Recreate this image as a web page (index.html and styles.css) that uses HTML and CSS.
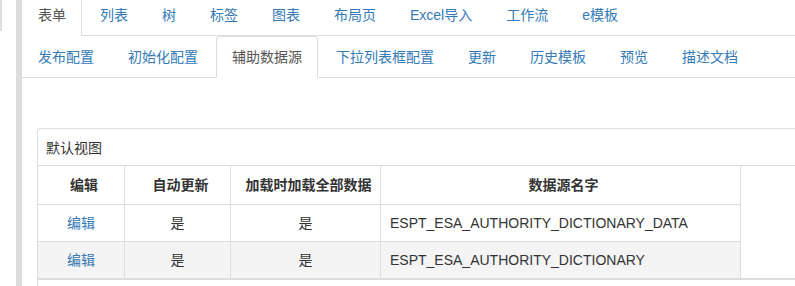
FILE: index.html
```html
<!DOCTYPE html>
<html lang="zh-CN">
<head>
    <meta charset="UTF-8">
    <title>辅助数据源</title>
    <link rel="stylesheet" href="styles.css">
</head>
<body>
    <div class="layout">
        <div class="side">
            <div class="side-mark"></div>
        </div>
        <div class="side-bar"></div>
        <div class="main">
            <ul class="nav-tabs top-tabs">
                <li class="active"><a href="#">表单</a></li>
                <li><a href="#">列表</a></li>
                <li><a href="#">树</a></li>
                <li><a href="#">标签</a></li>
                <li><a href="#">图表</a></li>
                <li><a href="#">布局页</a></li>
                <li><a href="#">Excel导入</a></li>
                <li><a href="#">工作流</a></li>
                <li><a href="#">e模板</a></li>
            </ul>
            <ul class="nav-tabs">
                <li><a href="#">发布配置</a></li>
                <li><a href="#">初始化配置</a></li>
                <li class="active"><a href="#">辅助数据源</a></li>
                <li><a href="#">下拉列表框配置</a></li>
                <li><a href="#">更新</a></li>
                <li><a href="#">历史模板</a></li>
                <li><a href="#">预览</a></li>
                <li><a href="#">描述文档</a></li>
            </ul>
            <div class="tab-content">
                <div class="panel">
                    <div class="panel-heading">默认视图</div>
                    <div class="table-wrap">
                        <table class="grid">
                            <tr>
                                <th class="col-edit">编辑</th>
                                <th class="col-auto">自动更新</th>
                                <th class="col-load">加载时加载全部数据</th>
                                <th class="col-name">数据源名字</th>
                            </tr>
                            <tr>
                                <td><a href="#">编辑</a></td>
                                <td>是</td>
                                <td>是</td>
                                <td class="name">ESPT_ESA_AUTHORITY_DICTIONARY_DATA</td>
                            </tr>
                            <tr class="alt">
                                <td><a href="#">编辑</a></td>
                                <td>是</td>
                                <td>是</td>
                                <td class="name">ESPT_ESA_AUTHORITY_DICTIONARY</td>
                            </tr>
                        </table>
                    </div>
                </div>
            </div>
        </div>
    </div>
</body>
</html>
```

FILE: styles.css
```css
body {
    margin: 0;
    font-family: "Liberation Sans", "Noto Sans CJK SC", sans-serif;
    font-size: 14px;
    line-height: 20px;
    color: #333;
    background: #fff;
    overflow: hidden;
}
a {
    color: #337ab7;
    text-decoration: none;
}
.layout {
    display: flex;
    height: 286px;
    overflow: hidden;
}
.side {
    width: 16px;
    flex: none;
}
.side-mark {
    width: 2px;
    height: 31px;
    background: #dddddd;
}
.side-bar {
    width: 6px;
    flex: none;
    background: #dddddd;
}
.main {
    flex: 1;
    min-width: 0;
    overflow: hidden;
}
.nav-tabs {
    display: flex;
    list-style: none;
    margin: 0;
    padding: 0;
    border-bottom: 1px solid #ddd;
}
.top-tabs {
    margin-top: -6px;
}
.nav-tabs li {
    margin-bottom: -1px;
}
.nav-tabs a {
    display: block;
    padding: 10px 15px;
    margin-right: 2px;
    border: 1px solid transparent;
    border-radius: 4px 4px 0 0;
    white-space: nowrap;
}
.nav-tabs .active a {
    color: #555;
    background: #fff;
    border-color: #ddd;
    border-bottom-color: transparent;
}
.top-tabs .active a {
    border-left-color: transparent;
}
.tab-content {
    padding-top: 50px;
}
.panel {
    margin-left: 15px;
    border-top: 1px solid #ddd;
    border-left: 1px solid #ddd;
    border-radius: 4px 0 0 0;
    height: 157px;
}
.panel-heading {
    padding: 9px 8px 7px;
    border-bottom: 1px solid #ddd;
}
.table-wrap {
    border-bottom: 2px solid #ddd;
}
.grid {
    border-collapse: collapse;
}
.grid th,
.grid td {
    border-right: 1px solid #ddd;
    border-bottom: 1px solid #ddd;
    text-align: center;
    padding: 8px;
}
.grid tr:last-child td {
    border-bottom: none;
}
.grid th {
    font-weight: bold;
    padding: 9px 5px 9px 11px;
}
.grid .alt td {
    background: #f4f4f4;
}
.grid td.name {
    text-align: left;
    padding-left: 9px;
}
.col-edit {
    width: 70px;
}
.col-auto {
    width: 89px;
}
.col-load {
    width: 133px;
}
.col-name {
    width: 343px;
}
```
